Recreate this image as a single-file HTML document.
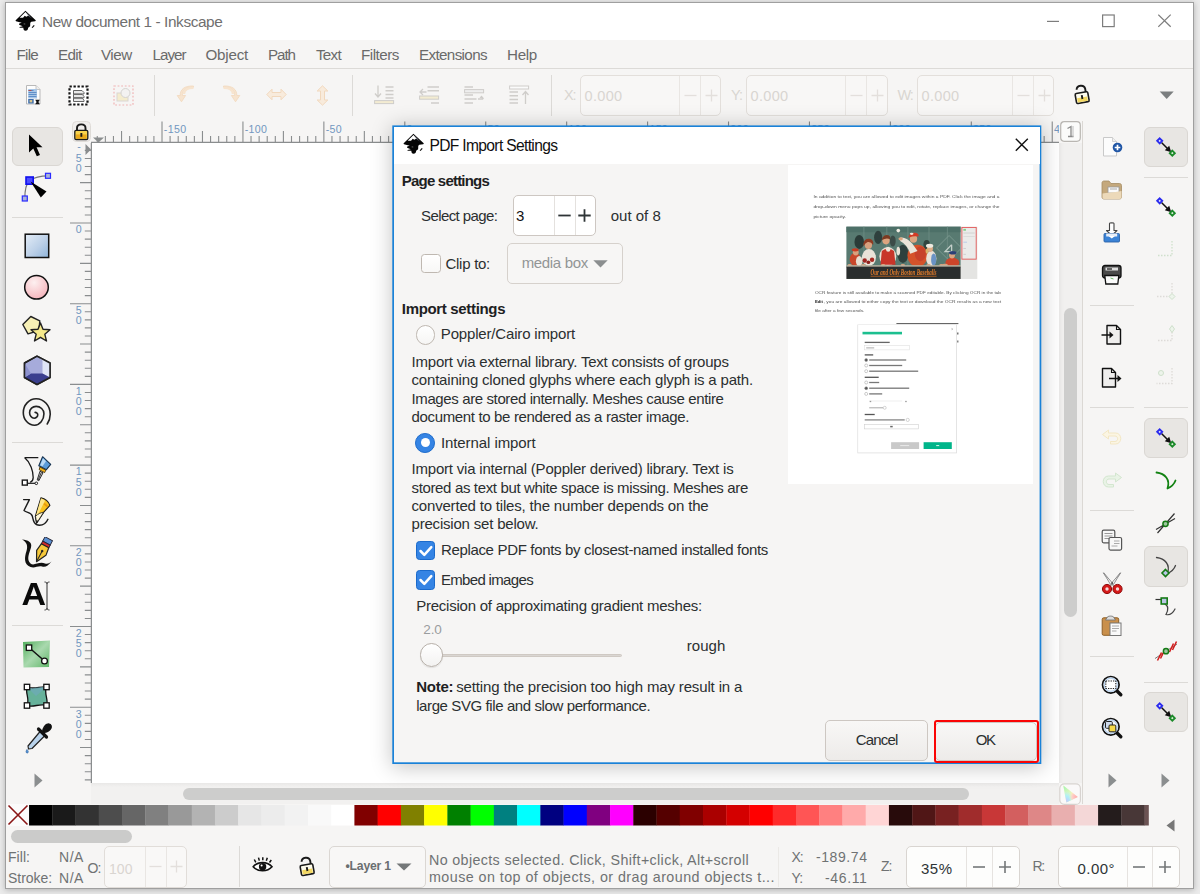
<!DOCTYPE html><html><head><meta charset="utf-8"><title>Inkscape</title><style>
*{box-sizing:border-box;margin:0;padding:0}
html,body{width:1200px;height:894px;overflow:hidden}
body{background:#ebebeb;font-family:"Liberation Sans",sans-serif;font-size:14px;color:#2e3436;position:relative}
.a{position:absolute}
.t{position:absolute;white-space:nowrap;line-height:1}
.hl{position:absolute;background:#dcdad7;height:1px}
.vl{position:absolute;background:#dcdad7;width:1px}
.spin{position:absolute;border:1px solid #ddd9d5;border-radius:5px;background:#faf9f8}
.spin2{position:absolute;border:1px solid #cdc7c2;border-radius:5px;background:#fff}
.btn{position:absolute;border:1px solid #cdc7c2;border-radius:5px;background:linear-gradient(#f8f7f6,#edebe9)}
.sel{position:absolute;background:#e8e6e3;border:1px solid #dad7d3;border-radius:6px}
</style></head><body>
<div class="a" style="left:5.0px;top:2.0px;width:1189.0px;height:887.0px;background:#f6f5f4;border:1px solid #9f9f9f;box-shadow:0 1px 6px rgba(0,0,0,.25)"></div>
<div class="a" style="left:6.0px;top:3.0px;width:1187.0px;height:37.0px;background:#fff"></div>
<svg class="a" style="left:15.0px;top:10.0px;" width="23" height="23" viewBox="0 0 23 23"><g transform="translate(-3,-4) scale(0.03356)"><path d="M400 138 L706 424 Q718 446 690 452 L575 470 L545 500 L540 600 L482 648 Q478 738 402 738 Q338 735 338 650 L222 650 L228 628 L320 600 L212 560 L215 522 L290 500 L120 458 Q96 446 110 428 Z" fill="#050505"/><path d="M400 178 L540 312 L480 288 L425 322 L380 292 L330 352 L228 352 Z" fill="#fff"/><path d="M418 196 L610 378 L520 330 L478 288 Z" fill="#5a5f6e" opacity=".75"/><path d="M585 640 L648 566 L676 590 L612 656 Z" fill="#111"/><path d="M345 520 Q380 500 405 535 Q380 560 345 545z" fill="#777" opacity=".7"/></g></svg>
<div class="t" style="left:42.0px;top:13.96px;font-size:15.4px;color:#6f6f6f;letter-spacing:-0.415px;">New document 1 - Inkscape</div>
<svg class="a" style="left:1046.0px;top:13.0px;" width="16" height="16" viewBox="0 0 16 16"><path d="M1 8.400h12" stroke="#7d7d7d" stroke-width="1.200"/></svg>
<svg class="a" style="left:1102.0px;top:14.0px;" width="14" height="14" viewBox="0 0 14 14"><rect x=".6" y="1" width="11.600" height="11.600" fill="none" stroke="#7d7d7d" stroke-width="1.200"/></svg>
<svg class="a" style="left:1158.0px;top:14.0px;" width="14" height="14" viewBox="0 0 14 14"><path d="M.3 .6l12.400 12.200M12.700 .6l-12.400 12.200" stroke="#7d7d7d" stroke-width="1.200"/></svg>
<div class="t" style="left:16.5px;top:47.13px;font-size:15.2px;color:#6a6a6a;letter-spacing:-0.747px;">File</div>
<div class="t" style="left:58.0px;top:47.13px;font-size:15.2px;color:#6a6a6a;letter-spacing:-0.623px;">Edit</div>
<div class="t" style="left:101.0px;top:47.13px;font-size:15.2px;color:#6a6a6a;letter-spacing:-0.491px;">View</div>
<div class="t" style="left:152.5px;top:47.13px;font-size:15.2px;color:#6a6a6a;letter-spacing:-1.004px;">Layer</div>
<div class="t" style="left:205.5px;top:47.13px;font-size:15.2px;color:#6a6a6a;letter-spacing:-0.238px;">Object</div>
<div class="t" style="left:268.0px;top:47.13px;font-size:15.2px;color:#6a6a6a;letter-spacing:-1.067px;">Path</div>
<div class="t" style="left:316.0px;top:47.13px;font-size:15.2px;color:#6a6a6a;letter-spacing:-0.719px;">Text</div>
<div class="t" style="left:361.0px;top:47.13px;font-size:15.2px;color:#6a6a6a;letter-spacing:-0.482px;">Filters</div>
<div class="t" style="left:419.0px;top:47.13px;font-size:15.2px;color:#6a6a6a;letter-spacing:-0.635px;">Extensions</div>
<div class="t" style="left:507.0px;top:47.13px;font-size:15.2px;color:#6a6a6a;letter-spacing:-0.314px;">Help</div>
<div class="hl" style="left:6px;top:68px;width:1187px"></div>
<div class="a" style="left:91.0px;top:143.0px;width:968.0px;height:640.0px;background:#fff"></div>
<svg class="a" style="left:25.0px;top:85.0px;" width="17" height="21" viewBox="0 0 17 21"><path d="M1.5 .5h9.500l4 4v14.500h-13.500z" fill="#fdfdfd" stroke="#b9b9b9" stroke-width="1"/><path d="M11 .5v4h4" fill="#eee" stroke="#b9b9b9" stroke-width=".8"/><rect x="3.2" y="4" width="8.800" height="9.500" fill="#a9c6e6"/><path d="M3.500 5.500h5M3.500 7.500h8M3.500 9.500h8M3.500 11.500h8" stroke="#5f8fc9" stroke-width="1"/><path d="M3.500 5.500h3" stroke="#b05050" stroke-width="1"/><rect x="3.200" y="14" width="5.500" height="4.500" fill="#3f6fae"/><rect x="4.600" y="15" width="2.600" height="2.400" fill="#d8c48a"/><path d="M10.200 14.700h4.600l-1.400 2.200 1.400 2.300h-4.600l1.400-2.300z" fill="#111"/></svg>
<svg class="a" style="left:68.0px;top:85.0px;" width="21" height="21" viewBox="0 0 21 21"><rect x="1.500" y="1.500" width="18" height="18" fill="#fff" stroke="#111" stroke-width="2.200" stroke-dasharray="2.300 1.700"/><path d="M5.500 5.500h8.500l2 2v1.500h-10.500z M5.500 9.300h8.500l2 2v1.500h-10.500z M5.500 13.100h8.500l2 2v1.400h-10.500z" fill="#e9e9e9" stroke="#555" stroke-width=".9"/></svg>
<svg class="a" style="left:113.0px;top:85.0px;" width="21" height="21" viewBox="0 0 21 21"><rect x="1" y="1" width="19" height="19" fill="none" stroke="#f0b4b4" stroke-width="1.200" stroke-dasharray="1.800 1.800"/><rect x="4" y="8" width="11" height="8" fill="#f4eccd" stroke="#d9d6d2" stroke-width="1"/><circle cx="12.500" cy="8" r="4.500" fill="#f3f2f1" stroke="#d5d3d0" stroke-width="1"/></svg>
<div class="vl" style="left:154px;top:75px;height:41px"></div>
<svg class="a" style="left:176.0px;top:85.0px;" width="19" height="19" viewBox="0 0 19 19"><path d="M17.500 2.200C9.500 1.800 6.200 5.500 6.300 10.500H9.600L5.500 16.800L1.200 10.500H4.200C4 4.500 8.500 .6 17.500 1z" fill="#f7e4cf" stroke="#f1d8bd" stroke-width=".8" stroke-linejoin="round"/><path d="M17.500 2.900C12 2.800 8.200 5 8 9" fill="none" stroke="#f7e4cf" stroke-width="2.400"/></svg>
<svg class="a" style="left:222.0px;top:85.0px;" width="19" height="19" viewBox="0 0 19 19"><g transform="translate(19,0) scale(-1,1)"><path d="M17.500 2.200C9.500 1.800 6.200 5.500 6.300 10.500H9.600L5.500 16.800L1.200 10.500H4.200C4 4.500 8.500 .6 17.500 1z" fill="#f7e4cf" stroke="#f1d8bd" stroke-width=".8" stroke-linejoin="round"/><path d="M17.500 2.900C12 2.800 8.200 5 8 9" fill="none" stroke="#f7e4cf" stroke-width="2.400"/></g></svg>
<svg class="a" style="left:266.0px;top:88.0px;" width="21" height="13" viewBox="0 0 21 13"><path d="M.8 6.500L6 1.200V4.500H15V1.200L20.200 6.500L15 11.800V8.500H6V11.800z" fill="#f8ebdc" stroke="#f1d8bd" stroke-width="1" stroke-linejoin="round"/></svg>
<svg class="a" style="left:316.0px;top:85.0px;" width="13" height="21" viewBox="0 0 13 21"><path d="M6.500 .8L11.800 6H8.500V15H11.800L6.500 20.200L1.200 15H4.500V6H1.200z" fill="#f8ebdc" stroke="#f1d8bd" stroke-width="1" stroke-linejoin="round"/></svg>
<div class="vl" style="left:352px;top:75px;height:41px"></div>
<svg class="a" style="left:374.0px;top:85.0px;" width="21" height="20" viewBox="0 0 21 20"><path d="M4 .5V11M1 8.500l3 3.500 3-3.500" fill="none" stroke="#cfcdca" stroke-width="1.300"/><path d="M11.500 2h8M11.500 5.700h8M11.500 9.400h8M11.500 13h8" stroke="#cfcdca" stroke-width="1.500"/><rect x=".6" y="15.600" width="19" height="3" fill="#f3ecd2" stroke="#cfcdca" stroke-width="1"/></svg>
<svg class="a" style="left:419.0px;top:85.0px;" width="21" height="20" viewBox="0 0 21 20"><path d="M1 7h6.500M4 4l-3 3 3 3" fill="none" stroke="#cfcdca" stroke-width="1.300"/><path d="M8.500 2h11.500M8.500 5.700h11.500M12 18h8" stroke="#cfcdca" stroke-width="1.500"/><rect x=".6" y="11" width="19" height="3.200" fill="#f3ecd2" stroke="#cfcdca" stroke-width="1"/></svg>
<svg class="a" style="left:464.0px;top:85.0px;" width="21" height="20" viewBox="0 0 21 20"><path d="M.5 2h8.500M.5 10h8.500M.5 14h12M.5 18h8.500" stroke="#cfcdca" stroke-width="1.500"/><rect x=".6" y="4.600" width="19" height="3.200" fill="#eeeeee" stroke="#cfcdca" stroke-width="1"/><path d="M14 14h5M17 11.500l2.500 2.500" fill="none" stroke="#cfcdca" stroke-width="1.300"/><path d="M15.500 13l2-2.500 2 2.500z" fill="#cfcdca"/></svg>
<svg class="a" style="left:509.0px;top:85.0px;" width="21" height="20" viewBox="0 0 21 20"><rect x=".6" y="1" width="19" height="3" fill="#fbfbfb" stroke="#cfcdca" stroke-width="1"/><path d="M.5 7h8.500M.5 10.700h8.500M.5 14.400h8.500M.5 18h8.500" stroke="#cfcdca" stroke-width="1.500"/><path d="M16.500 19V7M13.500 10l3-3.500 3 3.500" fill="none" stroke="#cfcdca" stroke-width="1.300"/></svg>
<div class="vl" style="left:551px;top:75px;height:41px"></div>
<div class="t" style="left:564.0px;top:87.73px;font-size:14.5px;color:#d9d5d1;letter-spacing:-1.100px;">X:</div>
<div class="spin" style="left:580px;top:75px;width:141px;height:41px;background:#f8f7f6;border-color:#e3dfdb"></div>
<div class="vl" style="left:679px;top:76px;height:39px;background:#e9e6e3"></div>
<div class="vl" style="left:700px;top:76px;height:39px;background:#e9e6e3"></div>
<div class="t" style="left:584.5px;top:88.73px;font-size:14.5px;color:#d9d5d1;letter-spacing:0.345px;">0.000</div>
<svg class="a" style="left:683.5px;top:89.0px;" width="13" height="13" viewBox="0 0 13 13"><path d="M.5 6.500h12" stroke="#e3dfdc" stroke-width="1.300"/></svg>
<svg class="a" style="left:704.5px;top:89.0px;" width="13" height="13" viewBox="0 0 13 13"><path d="M.5 6.500h12M6.500 .5v12" stroke="#e3dfdc" stroke-width="1.300"/></svg>
<div class="t" style="left:731.0px;top:87.73px;font-size:14.5px;color:#d9d5d1;letter-spacing:-0.949px;">Y:</div>
<div class="spin" style="left:746px;top:75px;width:142px;height:41px;background:#f8f7f6;border-color:#e3dfdb"></div>
<div class="vl" style="left:845px;top:76px;height:39px;background:#e9e6e3"></div>
<div class="vl" style="left:866px;top:76px;height:39px;background:#e9e6e3"></div>
<div class="t" style="left:750.5px;top:88.73px;font-size:14.5px;color:#d9d5d1;letter-spacing:0.345px;">0.000</div>
<svg class="a" style="left:849.5px;top:89.0px;" width="13" height="13" viewBox="0 0 13 13"><path d="M.5 6.500h12" stroke="#e3dfdc" stroke-width="1.300"/></svg>
<svg class="a" style="left:871.0px;top:89.0px;" width="13" height="13" viewBox="0 0 13 13"><path d="M.5 6.500h12M6.500 .5v12" stroke="#e3dfdc" stroke-width="1.300"/></svg>
<div class="t" style="left:897.5px;top:87.73px;font-size:14.5px;color:#d9d5d1;letter-spacing:-1.227px;">W:</div>
<div class="spin" style="left:917px;top:75px;width:137px;height:41px;background:#f8f7f6;border-color:#e3dfdb"></div>
<div class="vl" style="left:1012px;top:76px;height:39px;background:#e9e6e3"></div>
<div class="vl" style="left:1033px;top:76px;height:39px;background:#e9e6e3"></div>
<div class="t" style="left:921.5px;top:88.73px;font-size:14.5px;color:#d9d5d1;letter-spacing:0.345px;">0.000</div>
<svg class="a" style="left:1016.5px;top:89.0px;" width="13" height="13" viewBox="0 0 13 13"><path d="M.5 6.500h12" stroke="#e3dfdc" stroke-width="1.300"/></svg>
<svg class="a" style="left:1037.5px;top:89.0px;" width="13" height="13" viewBox="0 0 13 13"><path d="M.5 6.500h12M6.500 .5v12" stroke="#e3dfdc" stroke-width="1.300"/></svg>
<svg class="a" style="left:1072.0px;top:82.3px;" width="20" height="23" viewBox="0 0 20 23"><g transform="rotate(-10 10 13)"><path d="M14.200 11V7.200C13.800 2.600 6.500 2.400 5.600 6.800" fill="none" stroke="#1a1a1a" stroke-width="1.900"/><rect x="3.300" y="10.600" width="12.800" height="10" rx="1.300" fill="#fdfbec" stroke="#1a1a1a" stroke-width="1.600"/><rect x="4.600" y="15.400" width="10.200" height="4.300" fill="#f3d862"/><rect x="8.800" y="13" width="1.900" height="4" fill="#1a1a1a"/></g></svg>
<svg class="a" style="left:1159.0px;top:91.0px;" width="16" height="9" viewBox="0 0 16 9"><path d="M.7 .5h14l-7 7.600z" fill="#7b7e7f"/></svg>
<svg class="a" style="left:91.0px;top:121.0px;" width="968" height="22" viewBox="0 0 968 22"><path d="M6.27 15V21.500 M14.36 15V21.500 M22.45 15V21.500 M30.55 10V21.500 M38.64 15V21.500 M46.73 15V21.500 M54.82 15V21.500 M62.92 15V21.500 M71.01 0.5V21.500 M79.10 15V21.500 M87.20 15V21.500 M95.29 15V21.500 M103.38 15V21.500 M111.47 10V21.500 M119.57 15V21.500 M127.66 15V21.500 M135.75 15V21.500 M143.85 15V21.500 M151.94 0.5V21.500 M160.03 15V21.500 M168.13 15V21.500 M176.22 15V21.500 M184.31 15V21.500 M192.40 10V21.500 M200.50 15V21.500 M208.59 15V21.500 M216.68 15V21.500 M224.78 15V21.500 M232.87 0.5V21.500 M240.96 15V21.500 M249.06 15V21.500 M257.15 15V21.500 M265.24 15V21.500 M273.34 10V21.500 M281.43 15V21.500 M289.52 15V21.500 M297.61 15V21.500 M305.71 15V21.500 M313.80 0.5V21.500 M321.89 15V21.500 M329.99 15V21.500 M338.08 15V21.500 M346.17 15V21.500 M354.26 10V21.500 M362.36 15V21.500 M370.45 15V21.500 M378.54 15V21.500 M386.64 15V21.500 M394.73 0.5V21.500 M402.82 15V21.500 M410.92 15V21.500 M419.01 15V21.500 M427.10 15V21.500 M435.20 10V21.500 M443.29 15V21.500 M451.38 15V21.500 M459.47 15V21.500 M467.57 15V21.500 M475.66 0.5V21.500 M483.75 15V21.500 M491.85 15V21.500 M499.94 15V21.500 M508.03 15V21.500 M516.12 10V21.500 M524.22 15V21.500 M532.31 15V21.500 M540.40 15V21.500 M548.50 15V21.500 M556.59 0.5V21.500 M564.68 15V21.500 M572.78 15V21.500 M580.87 15V21.500 M588.96 15V21.500 M597.06 10V21.500 M605.15 15V21.500 M613.24 15V21.500 M621.33 15V21.500 M629.43 15V21.500 M637.52 0.5V21.500 M645.61 15V21.500 M653.71 15V21.500 M661.80 15V21.500 M669.89 15V21.500 M677.99 10V21.500 M686.08 15V21.500 M694.17 15V21.500 M702.26 15V21.500 M710.36 15V21.500 M718.45 0.5V21.500 M726.54 15V21.500 M734.64 15V21.500 M742.73 15V21.500 M750.82 15V21.500 M758.92 10V21.500 M767.01 15V21.500 M775.10 15V21.500 M783.19 15V21.500 M791.29 15V21.500 M799.38 0.5V21.500 M807.47 15V21.500 M815.57 15V21.500 M823.66 15V21.500 M831.75 15V21.500 M839.85 10V21.500 M847.94 15V21.500 M856.03 15V21.500 M864.12 15V21.500 M872.22 15V21.500 M880.31 0.5V21.500 M888.40 15V21.500 M896.50 15V21.500 M904.59 15V21.500 M912.68 15V21.500 M920.78 10V21.500 M928.87 15V21.500 M936.96 15V21.500 M945.05 15V21.500 M953.15 15V21.500 M961.24 0.5V21.500" stroke="#8a8d8e" stroke-width="1.100" fill="none"/><path d="M0 21.500H968" stroke="#8a8d8e" stroke-width="1.300"/></svg>
<div class="a" style="left:91px;top:118px;width:968px;height:25px;overflow:hidden">
<div class="t" style="left:72.8px;top:5.83px;font-size:10.6px;color:#7297c0;letter-spacing:.35px;">-150</div>
<div class="t" style="left:153.7px;top:5.83px;font-size:10.6px;color:#7297c0;letter-spacing:.35px;">-100</div>
<div class="t" style="left:234.7px;top:5.83px;font-size:10.6px;color:#7297c0;letter-spacing:.35px;">-50</div>
<div class="t" style="left:315.6px;top:5.83px;font-size:10.6px;color:#7297c0;letter-spacing:.35px;">0</div>
<div class="t" style="left:396.5px;top:5.83px;font-size:10.6px;color:#7297c0;letter-spacing:.35px;">50</div>
<div class="t" style="left:477.5px;top:5.83px;font-size:10.6px;color:#7297c0;letter-spacing:.35px;">100</div>
<div class="t" style="left:558.4px;top:5.83px;font-size:10.6px;color:#7297c0;letter-spacing:.35px;">150</div>
<div class="t" style="left:639.3px;top:5.83px;font-size:10.6px;color:#7297c0;letter-spacing:.35px;">200</div>
<div class="t" style="left:720.2px;top:5.83px;font-size:10.6px;color:#7297c0;letter-spacing:.35px;">250</div>
<div class="t" style="left:801.2px;top:5.83px;font-size:10.6px;color:#7297c0;letter-spacing:.35px;">300</div>
<div class="t" style="left:882.1px;top:5.83px;font-size:10.6px;color:#7297c0;letter-spacing:.35px;">350</div>
<div class="t" style="left:963.0px;top:5.83px;font-size:10.6px;color:#7297c0;letter-spacing:.35px;">400</div>
</div>
<svg class="a" style="left:69.5px;top:143.0px;" width="22" height="640" viewBox="0 0 22 640"><path d="M14.8 7.37H21.500 M14.8 15.44H21.500 M14.8 23.51H21.500 M14.8 31.58H21.500 M10 39.65H21.500 M14.8 47.72H21.500 M14.8 55.79H21.500 M14.8 63.86H21.500 M14.8 71.93H21.500 M0 80.00H21.500 M14.8 88.07H21.500 M14.8 96.14H21.500 M14.8 104.21H21.500 M14.8 112.28H21.500 M10 120.35H21.500 M14.8 128.42H21.500 M14.8 136.49H21.500 M14.8 144.56H21.500 M14.8 152.63H21.500 M0 160.70H21.500 M14.8 168.77H21.500 M14.8 176.84H21.500 M14.8 184.91H21.500 M14.8 192.98H21.500 M10 201.05H21.500 M14.8 209.12H21.500 M14.8 217.19H21.500 M14.8 225.26H21.500 M14.8 233.33H21.500 M0 241.40H21.500 M14.8 249.47H21.500 M14.8 257.54H21.500 M14.8 265.61H21.500 M14.8 273.68H21.500 M10 281.75H21.500 M14.8 289.82H21.500 M14.8 297.89H21.500 M14.8 305.96H21.500 M14.8 314.03H21.500 M0 322.10H21.500 M14.8 330.17H21.500 M14.8 338.24H21.500 M14.8 346.31H21.500 M14.8 354.38H21.500 M10 362.45H21.500 M14.8 370.52H21.500 M14.8 378.59H21.500 M14.8 386.66H21.500 M14.8 394.73H21.500 M0 402.80H21.500 M14.8 410.87H21.500 M14.8 418.94H21.500 M14.8 427.01H21.500 M14.8 435.08H21.500 M10 443.15H21.500 M14.8 451.22H21.500 M14.8 459.29H21.500 M14.8 467.36H21.500 M14.8 475.43H21.500 M0 483.50H21.500 M14.8 491.57H21.500 M14.8 499.64H21.500 M14.8 507.71H21.500 M14.8 515.78H21.500 M10 523.85H21.500 M14.8 531.92H21.500 M14.8 539.99H21.500 M14.8 548.06H21.500 M14.8 556.13H21.500 M0 564.20H21.500 M14.8 572.27H21.500 M14.8 580.34H21.500 M14.8 588.41H21.500 M14.8 596.48H21.500 M10 604.55H21.500 M14.8 612.62H21.500 M14.8 620.69H21.500 M14.8 628.76H21.500 M14.8 636.83H21.500" stroke="#8a8d8e" stroke-width="1.100" fill="none"/><path d="M21.400 0V640" stroke="#8a8d8e" stroke-width="1.300"/></svg>
<div class="t" style="left:77.2px;top:141.13px;font-size:10.6px;color:#7297c0;">-</div>
<div class="t" style="left:75.7px;top:152.78px;font-size:10.6px;color:#7297c0;">5</div>
<div class="t" style="left:75.7px;top:162.93px;font-size:10.6px;color:#7297c0;">0</div>
<div class="t" style="left:75.7px;top:224.33px;font-size:10.6px;color:#7297c0;">0</div>
<div class="t" style="left:75.7px;top:305.03px;font-size:10.6px;color:#7297c0;">5</div>
<div class="t" style="left:75.7px;top:315.18px;font-size:10.6px;color:#7297c0;">0</div>
<div class="t" style="left:75.7px;top:385.73px;font-size:10.6px;color:#7297c0;">1</div>
<div class="t" style="left:75.7px;top:395.88px;font-size:10.6px;color:#7297c0;">0</div>
<div class="t" style="left:75.7px;top:406.03px;font-size:10.6px;color:#7297c0;">0</div>
<div class="t" style="left:75.7px;top:466.43px;font-size:10.6px;color:#7297c0;">1</div>
<div class="t" style="left:75.7px;top:476.58px;font-size:10.6px;color:#7297c0;">5</div>
<div class="t" style="left:75.7px;top:486.73px;font-size:10.6px;color:#7297c0;">0</div>
<div class="t" style="left:75.7px;top:547.13px;font-size:10.6px;color:#7297c0;">2</div>
<div class="t" style="left:75.7px;top:557.28px;font-size:10.6px;color:#7297c0;">0</div>
<div class="t" style="left:75.7px;top:567.43px;font-size:10.6px;color:#7297c0;">0</div>
<div class="t" style="left:75.7px;top:627.83px;font-size:10.6px;color:#7297c0;">2</div>
<div class="t" style="left:75.7px;top:637.98px;font-size:10.6px;color:#7297c0;">5</div>
<div class="t" style="left:75.7px;top:648.13px;font-size:10.6px;color:#7297c0;">0</div>
<div class="t" style="left:75.7px;top:708.53px;font-size:10.6px;color:#7297c0;">3</div>
<div class="t" style="left:75.7px;top:718.68px;font-size:10.6px;color:#7297c0;">0</div>
<div class="t" style="left:75.7px;top:728.83px;font-size:10.6px;color:#7297c0;">0</div>
<svg class="a" style="left:92.0px;top:137.0px;" width="14" height="6" viewBox="0 0 14 6"><path d="M1 .5h11l-5.500 5z" fill="#8a8d8e"/></svg>
<svg class="a" style="left:85.0px;top:143.0px;" width="7" height="14" viewBox="0 0 7 14"><path d="M.5 1v11l5.500-5.500z" fill="#8a8d8e"/></svg>
<svg class="a" style="left:72.0px;top:121.0px;" width="19" height="21" viewBox="0 0 19 21"><rect x=".5" y=".5" width="18" height="20" rx="4" fill="#f0eeec" stroke="#dedbd7"/><path d="M5 9.500V7C5 2.200 13.500 2.200 13.500 7V9.500" fill="none" stroke="#1a1a1a" stroke-width="1.900"/><rect x="2.800" y="9.300" width="13" height="9.200" rx="1.300" fill="#f7d34f" stroke="#1a1a1a" stroke-width="1.300"/><rect x="4" y="13.400" width="10.600" height="4.200" fill="#e9a91b"/><rect x="8.400" y="12" width="1.900" height="3.800" fill="#1a1a1a"/></svg>
<div class="a" style="left:91.0px;top:783.0px;width:968.0px;height:21.0px;background:linear-gradient(#e9e8e7,#f2f1f0 4px,#f2f1f0)"></div>
<div class="a" style="left:183.0px;top:787.5px;width:786.0px;height:12.5px;background:#cdcdcc;border-radius:6.500px"></div>
<div class="a" style="left:1059.0px;top:143.0px;width:23.0px;height:640.0px;background:linear-gradient(90deg,#e9e8e7,#f1f0ef 4px,#f1f0ef)"></div>
<div class="a" style="left:1064.2px;top:307.5px;width:12.5px;height:309.0px;background:#cdcdcc;border-radius:6.500px"></div>
<div class="vl" style="left:1082px;top:121px;height:683px;background:#dbd8d4"></div>
<svg class="a" style="left:1060.0px;top:121.0px;" width="21" height="21" viewBox="0 0 21 21"><rect x=".7" y=".7" width="19.600" height="19.600" rx="3.500" fill="#fbfbfa" stroke="#b9b6b2" stroke-width="1.200"/><path d="M7.500 7.500l3.500-2v10M8 15.500h5.500" fill="none" stroke="#8b8b8b" stroke-width="1.300"/><path d="M13 5v11" stroke="#bdbdbd" stroke-width="1"/></svg>
<svg class="a" style="left:1059.0px;top:782.5px;" width="23" height="23" viewBox="0 0 23 23"><defs><clipPath id="tri"><path d="M4.300 2.400L18.800 13.900L7.400 19.600z"/></clipPath><radialGradient id="gA" cx="5" cy="4" r="11" gradientUnits="userSpaceOnUse"><stop offset="0" stop-color="#a9f5b4"/><stop offset="1" stop-color="#a9f5b4" stop-opacity="0"/></radialGradient><radialGradient id="gB" cx="7" cy="18" r="10" gradientUnits="userSpaceOnUse"><stop offset="0" stop-color="#c3c9fa"/><stop offset=".5" stop-color="#aef0f8"/><stop offset="1" stop-color="#aef0f8" stop-opacity="0"/></radialGradient><radialGradient id="gC" cx="18" cy="14" r="8" gradientUnits="userSpaceOnUse"><stop offset="0" stop-color="#ffaab0"/><stop offset=".6" stop-color="#ffd0c8"/><stop offset="1" stop-color="#fff6a8" stop-opacity="0"/></radialGradient></defs><rect x=".8" y=".8" width="20.600" height="20.600" rx="4.500" fill="#faf9f9" stroke="#d7d3d0" stroke-width="1.200"/><g clip-path="url(#tri)"><rect width="23" height="23" fill="#f7f7c0"/><rect width="23" height="23" fill="url(#gA)"/><rect width="23" height="23" fill="url(#gB)"/><rect width="23" height="23" fill="url(#gC)"/></g></svg>
<svg class="a" style="left:7.0px;top:804.0px;" width="22" height="22" viewBox="0 0 22 22"><rect x="0" y="0" width="22" height="22" fill="#fbfbfb"/><path d="M1.500 1.500l19 19M20.500 1.500l-19 19" stroke="#8a1515" stroke-width="1.600"/></svg>
<svg class="a" style="left:29.0px;top:804.5px;" width="1120" height="21" viewBox="0 0 1120 21"><rect x="0.05" y="0" width="23.54" height="20.500" fill="#000000"/><rect x="23.29" y="0" width="23.54" height="20.500" fill="#1a1a1a"/><rect x="46.53" y="0" width="23.54" height="20.500" fill="#333333"/><rect x="69.77" y="0" width="23.54" height="20.500" fill="#4d4d4d"/><rect x="93.01" y="0" width="23.54" height="20.500" fill="#666666"/><rect x="116.25" y="0" width="23.54" height="20.500" fill="#808080"/><rect x="139.49" y="0" width="23.54" height="20.500" fill="#999999"/><rect x="162.73" y="0" width="23.54" height="20.500" fill="#b3b3b3"/><rect x="185.97" y="0" width="23.54" height="20.500" fill="#cccccc"/><rect x="209.21" y="0" width="23.54" height="20.500" fill="#e6e6e6"/><rect x="232.45" y="0" width="23.54" height="20.500" fill="#ececec"/><rect x="255.69" y="0" width="23.54" height="20.500" fill="#f2f2f2"/><rect x="278.93" y="0" width="23.54" height="20.500" fill="#f9f9f9"/><rect x="302.17" y="0" width="23.54" height="20.500" fill="#ffffff"/><rect x="325.41" y="0" width="23.54" height="20.500" fill="#800000"/><rect x="348.65" y="0" width="23.54" height="20.500" fill="#ff0000"/><rect x="371.89" y="0" width="23.54" height="20.500" fill="#808000"/><rect x="395.13" y="0" width="23.54" height="20.500" fill="#ffff00"/><rect x="418.37" y="0" width="23.54" height="20.500" fill="#008000"/><rect x="441.61" y="0" width="23.54" height="20.500" fill="#00ff00"/><rect x="464.85" y="0" width="23.54" height="20.500" fill="#008080"/><rect x="488.09" y="0" width="23.54" height="20.500" fill="#00ffff"/><rect x="511.33" y="0" width="23.54" height="20.500" fill="#000080"/><rect x="534.57" y="0" width="23.54" height="20.500" fill="#0000ff"/><rect x="557.81" y="0" width="23.54" height="20.500" fill="#800080"/><rect x="581.05" y="0" width="23.54" height="20.500" fill="#ff00ff"/><rect x="604.29" y="0" width="23.54" height="20.500" fill="#2b0000"/><rect x="627.53" y="0" width="23.54" height="20.500" fill="#550000"/><rect x="650.77" y="0" width="23.54" height="20.500" fill="#800000"/><rect x="674.01" y="0" width="23.54" height="20.500" fill="#aa0000"/><rect x="697.25" y="0" width="23.54" height="20.500" fill="#d40000"/><rect x="720.49" y="0" width="23.54" height="20.500" fill="#ff0000"/><rect x="743.73" y="0" width="23.54" height="20.500" fill="#ff2a2a"/><rect x="766.97" y="0" width="23.54" height="20.500" fill="#ff5555"/><rect x="790.21" y="0" width="23.54" height="20.500" fill="#ff8080"/><rect x="813.45" y="0" width="23.54" height="20.500" fill="#ffaaaa"/><rect x="836.69" y="0" width="23.54" height="20.500" fill="#ffd5d5"/><rect x="859.93" y="0" width="23.54" height="20.500" fill="#280b0b"/><rect x="883.17" y="0" width="23.54" height="20.500" fill="#501616"/><rect x="906.41" y="0" width="23.54" height="20.500" fill="#782121"/><rect x="929.65" y="0" width="23.54" height="20.500" fill="#a02c2c"/><rect x="952.89" y="0" width="23.54" height="20.500" fill="#c83737"/><rect x="976.13" y="0" width="23.54" height="20.500" fill="#d35f5f"/><rect x="999.37" y="0" width="23.54" height="20.500" fill="#de8787"/><rect x="1022.61" y="0" width="23.54" height="20.500" fill="#e9afaf"/><rect x="1045.85" y="0" width="23.54" height="20.500" fill="#f4d7d7"/><rect x="1069.09" y="0" width="23.54" height="20.500" fill="#241c1c"/><rect x="1092.33" y="0" width="23.54" height="20.500" fill="#483737"/><rect x="1115.57" y="0" width="4.23" height="20.500" fill="#6c5353"/></svg>
<svg class="a" style="left:1166.0px;top:819.0px;" width="9" height="13" viewBox="0 0 9 13"><path d="M8.500 .5v12l-8-6z" fill="#777"/></svg>
<div class="a" style="left:11.0px;top:830.0px;width:121.0px;height:12.5px;background:#cbcbca;border-radius:6.500px"></div>
<div class="t" style="left:8.0px;top:849.65px;font-size:14px;color:#6f7273;letter-spacing:0.046px;">Fill:</div>
<div class="t" style="left:59.0px;top:849.65px;font-size:14px;color:#6f7273;letter-spacing:0.553px;">N/A</div>
<div class="t" style="left:8.0px;top:871.15px;font-size:14px;color:#6f7273;letter-spacing:-0.051px;">Stroke:</div>
<div class="t" style="left:59.0px;top:871.15px;font-size:14px;color:#6f7273;letter-spacing:0.553px;">N/A</div>
<div class="t" style="left:87.5px;top:860.65px;font-size:14px;color:#6f7273;letter-spacing:-0.891px;">O:</div>
<div class="spin" style="left:104px;top:846px;width:83px;height:41.500px;background:#f9f8f7;border-color:#e1ddd9"></div>
<div class="vl" style="left:145px;top:847px;height:40px;background:#e9e6e3"></div><div class="vl" style="left:166px;top:847px;height:40px;background:#e9e6e3"></div>
<div class="t" style="left:109.0px;top:861.65px;font-size:14px;color:#d9d5d1;letter-spacing:0.048px;">100</div>
<svg class="a" style="left:149.0px;top:860.0px;" width="13" height="13" viewBox="0 0 13 13"><path d="M.5 6.500h12" stroke="#e3dfdc" stroke-width="1.300"/></svg>
<svg class="a" style="left:170.0px;top:860.0px;" width="13" height="13" viewBox="0 0 13 13"><path d="M.5 6.500h12M6.500 .5v12" stroke="#e3dfdc" stroke-width="1.300"/></svg>
<div class="vl" style="left:238.500px;top:846px;height:41px"></div>
<svg class="a" style="left:252.0px;top:856.0px;" width="22" height="18" viewBox="0 0 22 18"><path d="M1.200 10.800C5.500 5.200 15.500 5.200 20 10.800C15.500 16 5.500 16 1.200 10.800z" fill="#fff" stroke="#111" stroke-width="1.600"/><circle cx="10.600" cy="10.800" r="3.700" fill="#111"/><circle cx="9.600" cy="9.600" r="1" fill="#fff"/><path d="M3.800 6.300L2.300 3.500M7.300 4.600L6.500 1.600M10.800 4.200V1.200M14.300 4.700L15.300 1.800M17.500 6.500L19.300 4" stroke="#111" stroke-width="1.500"/></svg>
<svg class="a" style="left:297.0px;top:853.8px;" width="20" height="23" viewBox="0 0 20 23"><g transform="rotate(-10 10 13)"><path d="M14.200 11V7.200C13.800 2.600 6.500 2.400 5.600 6.800" fill="none" stroke="#1a1a1a" stroke-width="1.900"/><rect x="3.300" y="10.600" width="12.800" height="10" rx="1.300" fill="#fdfbec" stroke="#1a1a1a" stroke-width="1.600"/><rect x="4.600" y="15.400" width="10.200" height="4.300" fill="#f3d862"/><rect x="8.800" y="13" width="1.900" height="4" fill="#1a1a1a"/></g></svg>
<div class="btn" style="left:329px;top:846px;width:96.500px;height:41.500px;background:#f8f7f6;border-color:#dbd7d3"></div>
<div class="t" style="left:345.5px;top:860.17px;font-size:12.2px;color:#6a6e70;font-weight:bold;letter-spacing:-0.187px;">•Layer 1</div>
<svg class="a" style="left:396.0px;top:863.0px;" width="16" height="8" viewBox="0 0 16 8"><path d="M.5 .5h15l-7.500 7z" fill="#757879"/></svg>
<div class="t" style="left:429.0px;top:852.90px;font-size:14.3px;color:#6f7273;letter-spacing:0.353px;">No objects selected. Click, Shift+click, Alt+scroll</div>
<div class="t" style="left:429.0px;top:870.40px;font-size:14.3px;color:#6f7273;letter-spacing:0.447px;">mouse on top of objects, or drag around objects t...</div>
<div class="vl" style="left:778px;top:847px;height:40px;background:#ebe9e6"></div>
<div class="t" style="left:791.5px;top:849.65px;font-size:14px;color:#6f7273;letter-spacing:-1.115px;">X:</div>
<div class="t" style="left:816.0px;top:849.65px;font-size:14px;color:#6f7273;letter-spacing:0.574px;">-189.74</div>
<div class="t" style="left:791.5px;top:871.15px;font-size:14px;color:#6f7273;letter-spacing:-0.729px;">Y:</div>
<div class="t" style="left:825.0px;top:871.15px;font-size:14px;color:#6f7273;letter-spacing:0.641px;">-46.11</div>
<div class="t" style="left:881.0px;top:859.15px;font-size:14px;color:#6f7273;letter-spacing:-0.971px;">Z:</div>
<div class="spin2" style="left:906px;top:846px;width:113.500px;height:41.500px;border-color:#d9d5d1;background:#fdfdfc"></div>
<div class="vl" style="left:966px;top:847px;height:40px;background:#e6e3e0"></div><div class="vl" style="left:992px;top:847px;height:40px;background:#e6e3e0"></div>
<div class="t" style="left:921.0px;top:860.80px;font-size:15px;color:#2e3436;letter-spacing:0.492px;">35%</div>
<svg class="a" style="left:972.0px;top:860.0px;" width="14" height="14" viewBox="0 0 14 14"><path d="M1 7h12" stroke="#747778" stroke-width="1.600"/></svg>
<svg class="a" style="left:997.5px;top:860.0px;" width="14" height="14" viewBox="0 0 14 14"><path d="M1 7h12M7 1v12" stroke="#747778" stroke-width="1.600"/></svg>
<div class="t" style="left:1032.5px;top:859.15px;font-size:14px;color:#6f7273;letter-spacing:-1.250px;">R:</div>
<div class="spin2" style="left:1057.500px;top:846px;width:122.200px;height:41.500px;border-color:#d9d5d1;background:#fdfdfc"></div>
<div class="vl" style="left:1127px;top:847px;height:40px;background:#e6e3e0"></div><div class="vl" style="left:1152px;top:847px;height:40px;background:#e6e3e0"></div>
<div class="t" style="left:1077.5px;top:860.80px;font-size:15px;color:#2e3436;letter-spacing:0.460px;">0.00°</div>
<svg class="a" style="left:1131.5px;top:860.0px;" width="14" height="14" viewBox="0 0 14 14"><path d="M1 7h12" stroke="#747778" stroke-width="1.600"/></svg>
<svg class="a" style="left:1157.5px;top:860.0px;" width="14" height="14" viewBox="0 0 14 14"><path d="M1 7h12M7 1v12" stroke="#747778" stroke-width="1.600"/></svg>
<div class="sel" style="left:11.500px;top:126.500px;width:51.500px;height:39.500px"></div>
<svg class="a" style="left:27.0px;top:133.0px;" width="18" height="26" viewBox="0 0 18 26"><path d="M2 1.500V19.500L6.300 15.500L9.800 23.300L13 21.900L9.600 14.300H15.500z" fill="#000"/></svg>
<svg class="a" style="left:21.0px;top:171.0px;" width="32" height="33" viewBox="0 0 32 33"><path d="M8.500 9.500C5 13 3.800 20 3.800 27.500" fill="none" stroke="#777" stroke-width="1.200"/><path d="M8.500 9.500C13 6.500 20 4.800 27 4.800" fill="none" stroke="#777" stroke-width="1.200"/><rect x="5" y="6" width="7.200" height="7.200" fill="#4d4dff" stroke="#1010ee" stroke-width="1.600"/><rect x="24.500" y="2.300" width="5" height="5" fill="#a9b3d9" stroke="#2a2aff" stroke-width="1.200"/><rect x="1.300" y="25" width="5" height="5" fill="#a9b3d9" stroke="#2a2aff" stroke-width="1.200"/><path d="M9.500 10.500L25.500 20.500L19.800 26.500z" fill="#000"/></svg>
<div class="hl" style="left:11.500px;top:217px;width:51.500px"></div>
<svg class="a" style="left:24.0px;top:233.0px;" width="26" height="26" viewBox="0 0 26 26"><defs><linearGradient id="rg" x1="0" y1="0" x2="1" y2="1"><stop offset="0" stop-color="#e4edf7"/><stop offset=".55" stop-color="#bcd0e8"/><stop offset="1" stop-color="#8fb4d9"/></linearGradient></defs><rect x="1.200" y="1.200" width="23.500" height="23.300" fill="url(#rg)" stroke="#111" stroke-width="1.500"/></svg>
<svg class="a" style="left:23.0px;top:274.0px;" width="27" height="27" viewBox="0 0 27 27"><defs><radialGradient id="cg2" cx=".4" cy=".3" r=".8"><stop offset="0" stop-color="#fdf0f0"/><stop offset="1" stop-color="#f5aeb6"/></radialGradient></defs><circle cx="13.500" cy="13.300" r="11.800" fill="url(#cg2)" stroke="#111" stroke-width="1.500"/></svg>
<svg class="a" style="left:21.0px;top:315.0px;" width="31" height="28" viewBox="0 0 31 28"><path d="M9.800 1.500L18.800 5.800L18 15.500L7 18.800L1.800 9.500z" fill="#f7f0b5" stroke="#222" stroke-width="1.400" stroke-linejoin="round"/><path d="M19.500 8L22 14.300L29 14.800L23.800 19.200L25.500 26L19.500 22.300L13.500 26L15.200 19.200L10 14.800L17 14.300z" fill="#f5e98a" stroke="#222" stroke-width="1.400" stroke-linejoin="round"/></svg>
<svg class="a" style="left:23.0px;top:355.0px;" width="29" height="31" viewBox="0 0 29 31"><path d="M14 1.200L27 8V22.500L14 29.500L1.500 22.500V8z" fill="#a6abdb" stroke="#222" stroke-width="1.500" stroke-linejoin="round"/><path d="M14 1.200L27 8V22.500L19.500 18.500V5.500z" fill="#dfe5f7"/><path d="M1.500 22.500L14 29.500L27 22.500L19.500 18.500H8z" fill="#3a3f8f"/><path d="M1.500 8L8 18.500L1.500 22.500z" fill="#8d92cf"/><path d="M14 1.200L27 8V22.500L14 29.500L1.500 22.500V8z" fill="none" stroke="#222" stroke-width="1.500" stroke-linejoin="round"/></svg>
<svg class="a" style="left:20.0px;top:398.0px;" width="32" height="32" viewBox="0 0 32 32"><path d="M15.13 14.40 A2.62 2.26 0 0 1 17.75 16.66 A3.62 3.52 0 0 1 14.12 20.18 A4.53 5.54 0 0 1 9.59 14.65 A6.54 6.29 0 0 1 16.14 8.36 A7.80 7.30 0 0 1 23.94 15.65 A9.31 11.58 0 0 1 14.63 27.23 A11.32 12.58 0 0 1 3.30 14.65 A12.83 13.84 0 0 1 16.14 0.81 A14.09 15.35 0 0 1 30.23 16.16 A15.10 16.61 0 0 1 27.21 25.97" fill="none" stroke="#222" stroke-width="1.600" stroke-linecap="round"/></svg>
<div class="hl" style="left:11.500px;top:442px;width:51.500px"></div>
<svg class="a" style="left:20.0px;top:454.0px;" width="34" height="34" viewBox="20 454 34 34"><path d="M24.500 457.600H38.300M24.500 457.600C30.500 462.500 33.200 471 33.200 477.500C33.200 480.500 32 481.600 30.200 482.300" fill="none" stroke="#1a1a1a" stroke-width="1.300"/><rect x="22.300" y="480.100" width="5" height="5" fill="#fff" stroke="#1a1a1a" stroke-width="1.400"/><path d="M27.500 483.300H35" stroke="#1a1a1a" stroke-width="1.200"/><circle cx="36.300" cy="483.300" r="1.300" fill="#fff" stroke="#1a1a1a" stroke-width="1"/><path d="M42.600 456.700L50.700 464.300L46.400 469.700L38.800 465.700z" fill="#5b9bd8" stroke="#16324f" stroke-width="1.100" stroke-linejoin="round"/><path d="M43 458.300L46 461.200L42.500 466.300L40.200 465.200z" fill="#b8d8f4"/><path d="M39.900 467L45.800 470.100L44.700 472.600L39.200 469.700z" fill="#f5b21a" stroke="#3b2a00" stroke-width=".8"/><path d="M40 471.200L43 472.800L38.800 480.800L37.200 479.900z" fill="#cfcfcf" stroke="#1a1a1a" stroke-width=".9"/><path d="M41.300 472.500L38.200 480" stroke="#1a1a1a" stroke-width=".8"/></svg>
<svg class="a" style="left:20.0px;top:495.0px;" width="34" height="34" viewBox="20 495 34 34"><path d="M23.600 499.600H29.400L24 510.500C27 513 31 512 32.300 516C33.300 520.500 34 525.300 39.500 525.300C43.500 525.300 46.500 522.500 47.900 519.300" fill="none" stroke="#1a1a1a" stroke-width="1.400" stroke-linejoin="round" stroke-linecap="round"/><path d="M40.900 497.800C44.500 498.500 48.500 501.500 49.900 505.400L43.800 512.200L36.600 523.200L35.300 516.400z" fill="#f9c21e" stroke="#1a1a1a" stroke-width="1.100" stroke-linejoin="round"/><path d="M40.900 498.600C42.500 499 44 499.800 45 500.800L38 514.500L35.900 516z" fill="#fde68a"/><path d="M35.500 516.300C38 513.800 41.500 512.300 43.600 512.300L36.600 523.200z" fill="#fff7d6" stroke="#1a1a1a" stroke-width=".8" stroke-linejoin="round"/><path d="M36.200 520.300L38.300 520.700L36.600 523.400z" fill="#111"/><path d="M44 503.500L47.800 506.800" stroke="#e89a10" stroke-width="2"/></svg>
<svg class="a" style="left:20.0px;top:537.0px;" width="33" height="33" viewBox="0 0 33 33"><path d="M2 2.500C8 3 12.500 5 11 10.500C9.500 16 6 22 10.500 26.500C14 29.500 19 24 25 26.500C28 27.500 30 25.500 31.500 24.500C28 29 25.500 30.500 22 29.500C18 28.500 15 31.500 10.500 30C3.500 27.500 4.500 20 6.500 14C8 9 7 5 2 2.500z" fill="#111"/><g transform="rotate(28 22 14)"><rect x="18" y="0" width="8.500" height="5" fill="#5b8fd0" stroke="#223" stroke-width=".9"/><rect x="18" y="5" width="8.500" height="3" fill="#d42a2a" stroke="#223" stroke-width=".9"/><path d="M18 8H26.500L27.500 16L22.200 26L17 16z" fill="#f6c83a" stroke="#222" stroke-width="1.200" stroke-linejoin="round"/><path d="M22.200 14V25" stroke="#222" stroke-width="1"/><circle cx="22.200" cy="14" r="1.200" fill="#222"/></g></svg>
<div class="t" style="left:21.500px;top:578px;font-size:34px;font-weight:bold;color:#0a0a0a;letter-spacing:0;transform:scaleY(.93);transform-origin:0 0">A</div>
<svg class="a" style="left:44.0px;top:581.0px;" width="6" height="30" viewBox="0 0 6 30"><path d="M3 1.500V28.500M.5 1C2 1 3 1.800 3 2.500C3 1.800 4 1 5.500 1M.5 29C2 29 3 28.200 3 27.500C3 28.200 4 29 5.500 29" fill="none" stroke="#333" stroke-width="1"/></svg>
<div class="hl" style="left:11.500px;top:624.500px;width:51.500px"></div>
<svg class="a" style="left:22.0px;top:640.0px;" width="29" height="28" viewBox="0 0 29 28"><defs><linearGradient id="gg" x1="0" y1="0" x2="1" y2="1"><stop offset="0" stop-color="#4fae5a"/><stop offset=".5" stop-color="#a9d9ae"/><stop offset="1" stop-color="#5fb568"/></linearGradient></defs><path d="M1 2L28 .5L27 27L1.500 27.500z" fill="url(#gg)"/><path d="M7 7.500L22.500 21" stroke="#111" stroke-width="1.500"/><rect x="4.300" y="5" width="5.400" height="5.400" fill="#fff" stroke="#111" stroke-width="1.300"/><circle cx="22.500" cy="21" r="2.900" fill="#fff" stroke="#111" stroke-width="1.300"/></svg>
<svg class="a" style="left:22.0px;top:682.0px;" width="30" height="28" viewBox="0 0 30 28"><path d="M5 5C11 8 19 4 24.500 5C21.500 11 27 18 24.500 23.500C18 21 11 26 5 23.500C8 17 3 11 5 5z" fill="#66b19a" stroke="#111" stroke-width="1.300"/><path d="M5 5C11 8 19 4 24.500 5L14 14z" fill="#6fa9b9" opacity=".7"/><rect x="2.300" y="2.300" width="5.400" height="5.400" fill="#fff" stroke="#111" stroke-width="1.300"/><rect x="21.800" y="2.300" width="5.400" height="5.400" fill="#fff" stroke="#111" stroke-width="1.300"/><rect x="2.300" y="20.800" width="5.400" height="5.400" fill="#fff" stroke="#111" stroke-width="1.300"/><rect x="21.800" y="20.800" width="5.400" height="5.400" fill="#fff" stroke="#111" stroke-width="1.300"/></svg>
<svg class="a" style="left:24.0px;top:722.0px;" width="29" height="32" viewBox="0 0 29 32"><path d="M16.500 9L21 13.500L8 26.500L4.500 27L4 24z" fill="#b9d3ec" stroke="#222" stroke-width="1.200" stroke-linejoin="round"/><path d="M14.500 7L22.500 15" stroke="#111" stroke-width="3.200" stroke-linecap="round"/><path d="M18.500 10.500C19 7 21 2.500 24.500 2C27.500 2 28 5.500 26 7.500C24 9.500 21 10.500 18.500 10.500z" fill="#111" stroke="#111" stroke-width="1.500"/><path d="M3 27.500C1.500 29.500 2 31 3.200 31C4.500 31 4.800 29.500 3 27.500z" fill="#5b9fe0" stroke="#2b5f9f" stroke-width=".7"/></svg>
<svg class="a" style="left:34.0px;top:773.0px;" width="9" height="15" viewBox="0 0 9 15"><path d="M.5 .5l8 7-8 7z" fill="#8b8e8f"/></svg>
<svg class="a" style="left:1102.0px;top:136.0px;" width="22" height="22" viewBox="0 0 22 22"><path d="M1.500 1.500H10.500L14.500 5.500V20H1.500z" fill="#fcfcfc" stroke="#c9c9c9" stroke-width="1"/><path d="M10.500 1.500V5.500H14.500" fill="#f0f0f0" stroke="#c9c9c9" stroke-width=".8"/><circle cx="15.500" cy="11.500" r="4.800" fill="#1f55a5"/><path d="M15.500 8.700v5.600M12.700 11.500h5.600" stroke="#fff" stroke-width="1.700"/></svg>
<svg class="a" style="left:1101.0px;top:180.0px;" width="22" height="20" viewBox="0 0 22 20"><path d="M1 3C1 1.800 1.800 1 3 1H8L10 3.500H18.500C19.700 3.500 20.500 4.300 20.500 5.500V17C20.500 18.200 19.700 19 18.500 19H3C1.800 19 1 18.200 1 17z" fill="#c4a87c" stroke="#a58b62" stroke-width=".8"/><rect x="7" y="7" width="11" height="6" fill="#fafafa" stroke="#999" stroke-width=".8"/><path d="M9 9h7" stroke="#aaa" stroke-width="1"/><path d="M1.500 13.500C6 12.500 12 12.500 20.500 11V17C20.500 18.200 19.700 19 18.500 19H3C1.800 19 1.500 18.200 1.500 17z" fill="#ecd9b9"/></svg>
<svg class="a" style="left:1103.0px;top:222.0px;" width="18" height="21" viewBox="0 0 18 21"><path d="M6.500 1.500C6.500 .5 11 .5 11 1.500V8.500H14L8.800 13.500L3.500 8.500H6.500z" fill="#fff" stroke="#444" stroke-width="1.100" stroke-linejoin="round"/><rect x="1" y="11.500" width="15.500" height="8.500" rx="1" fill="#3b83d6" stroke="#2b63a8" stroke-width=".9"/><rect x="3.200" y="11.500" width="11" height="3" fill="#e8eef7"/><path d="M5.500 14l3.300 2.500L12 14z" fill="#fff"/></svg>
<svg class="a" style="left:1101.0px;top:264.0px;" width="22" height="22" viewBox="0 0 22 22"><rect x="1.500" y="1.500" width="18.500" height="12.500" rx="2.500" fill="#4a4a4a" stroke="#111" stroke-width="1.300"/><rect x="4.500" y="3.500" width="12.500" height="3" fill="#ddd"/><path d="M6 5h5" stroke="#222" stroke-width="1.300"/><path d="M3.800 11.500H17.800L16.800 20H4.800z" fill="#fbfbfb" stroke="#111" stroke-width="1.300"/><path d="M9.500 14l3 1" stroke="#6fbf6f" stroke-width="1"/></svg>
<div class="hl" style="left:1089.500px;top:304.500px;width:44.500px"></div>
<svg class="a" style="left:1101.0px;top:324.0px;" width="22" height="22" viewBox="0 0 22 22"><path d="M6 1.500H15.500L19.500 5.500V20H6z" fill="#efeeed" stroke="#111" stroke-width="1.400" stroke-linejoin="round"/><path d="M15.500 1.500V5.500H19.500" fill="none" stroke="#111" stroke-width="1.100"/><path d="M.5 11H10.500" stroke="#111" stroke-width="1.500"/><path d="M8.500 7.500L12.500 11L8.500 14.500z" fill="#111"/></svg>
<svg class="a" style="left:1101.0px;top:367.0px;" width="22" height="22" viewBox="0 0 22 22"><path d="M1.500 1.500H10.500L14.500 5.500V20H1.500z" fill="#efeeed" stroke="#111" stroke-width="1.400" stroke-linejoin="round"/><path d="M10.500 1.500V5.500H14.500" fill="none" stroke="#111" stroke-width="1.100"/><path d="M8 11.500H18" stroke="#111" stroke-width="1.500"/><path d="M16.500 8L20.500 11.500L16.500 15z" fill="#111"/></svg>
<div class="hl" style="left:1089.500px;top:407px;width:44.500px"></div>
<svg class="a" style="left:1101.0px;top:429.0px;" width="22" height="17" viewBox="0 0 22 17"><path d="M7.500 1L1.500 5.500L7.500 10V7H14C17.500 7 17.500 12.500 14 12.500H9.500V15H14.500C21.500 15 21.500 4 14.500 4H7.500z" fill="#fbf5e3" stroke="#f3e7c4" stroke-width="1" stroke-linejoin="round"/></svg>
<svg class="a" style="left:1101.0px;top:472.0px;" width="22" height="17" viewBox="0 0 22 17"><g transform="translate(22,0) scale(-1,1)"><path d="M7.500 1L1.500 5.500L7.500 10V7H14C17.500 7 17.500 12.500 14 12.500H9.500V15H14.500C21.500 15 21.500 4 14.500 4H7.500z" fill="#e9f3e6" stroke="#d3e6cf" stroke-width="1" stroke-linejoin="round"/></g></svg>
<div class="hl" style="left:1089.500px;top:510px;width:44.500px"></div>
<svg class="a" style="left:1101.0px;top:529.0px;" width="22" height="23" viewBox="0 0 22 23"><rect x="1.200" y="1.200" width="12.600" height="12.600" rx="1.500" fill="#f7f7f7" stroke="#555" stroke-width="1.200"/><path d="M3.500 4.500h8M3.500 7h8M3.500 9.500h5" stroke="#999" stroke-width="1"/><rect x="8" y="8.500" width="12.600" height="12.600" rx="1.500" fill="#f7f7f7" stroke="#555" stroke-width="1.200"/><path d="M13 12h5.500M13 14.500h5.500M10.500 17h6" stroke="#aaa" stroke-width="1"/></svg>
<svg class="a" style="left:1101.0px;top:572.0px;" width="23" height="23" viewBox="0 0 23 23"><path d="M2.500 .8L13 14.500M19.500 .8L9 14.500" stroke="#8a8a8a" stroke-width="1.200"/><path d="M2.500 .8L11 10.500L9.500 12.500z M19.500 .8L11 10.500L12.500 12.500z" fill="#f1f1f1" stroke="#8a8a8a" stroke-width=".9"/><circle cx="6" cy="17" r="4.600" fill="#d41919" stroke="#8f0b0b" stroke-width="1"/><circle cx="16.500" cy="17" r="4.600" fill="#d41919" stroke="#8f0b0b" stroke-width="1"/><circle cx="6" cy="17" r="1.700" fill="#f6dada"/><circle cx="16.500" cy="17" r="1.700" fill="#f6dada"/><circle cx="11.200" cy="11" r=".9" fill="#555"/></svg>
<svg class="a" style="left:1101.0px;top:615.0px;" width="22" height="22" viewBox="0 0 22 22"><rect x="1.200" y="2.800" width="16.500" height="17.500" rx="1.500" fill="#c98f4b" stroke="#8e5f26" stroke-width="1"/><path d="M6 2.800C6 .5 13 .5 13 2.800L14.500 5H4.500z" fill="#ddd" stroke="#777" stroke-width=".9"/><rect x="9" y="8" width="11" height="12.500" fill="#fafafa" stroke="#777" stroke-width="1"/><path d="M11 11h7M11 13.500h7M11 16h4.500" stroke="#aaa" stroke-width="1"/></svg>
<div class="hl" style="left:1089.500px;top:655.500px;width:44.500px"></div>
<svg class="a" style="left:1101.0px;top:675.0px;" width="23" height="23" viewBox="0 0 23 23"><circle cx="9.800" cy="9.800" r="8.300" fill="#fafafa" stroke="#111" stroke-width="1.700"/><circle cx="9.800" cy="9.800" r="6.600" fill="none" stroke="#b9d3ef" stroke-width="1.200"/><rect x="4.800" y="6" width="10" height="7.500" fill="#fff" stroke="#222" stroke-width="1.100" stroke-dasharray="1.300 1.100"/><path d="M16.300 16.300L19.800 19.800" stroke="#111" stroke-width="3.400" stroke-linecap="round"/></svg>
<svg class="a" style="left:1101.0px;top:717.0px;" width="23" height="23" viewBox="0 0 23 23"><circle cx="9.800" cy="9.800" r="8.300" fill="#fafafa" stroke="#111" stroke-width="1.700"/><circle cx="9.800" cy="9.800" r="6.600" fill="none" stroke="#b9d3ef" stroke-width="1.200"/><rect x="4.500" y="4.500" width="6.800" height="6.800" rx="1" fill="#cfdbec" stroke="#222" stroke-width="1"/><rect x="8" y="8" width="6.800" height="6.800" rx="1" fill="#f5d94a" stroke="#222" stroke-width="1"/><path d="M16.300 16.300L19.800 19.800" stroke="#111" stroke-width="3.400" stroke-linecap="round"/></svg>
<svg class="a" style="left:1108.0px;top:773.0px;" width="9" height="15" viewBox="0 0 9 15"><path d="M.5 .5l8 7-8 7z" fill="#8b8e8f"/></svg>
<div class="sel" style="left:1144px;top:126.5px;width:44px;height:40.5px"></div>
<svg class="a" style="left:1153.5px;top:134.7px;" width="24" height="24" viewBox="0 0 24 24"><path d="M7.500 7.500L14.500 14.500" stroke="#111" stroke-width="1.500"/><path d="M17.300 17.300L10.800 15.200L15.200 10.800z" fill="#111"/><path d="M5.700 3.300L8.200 5.800L5.700 8.300L3.200 5.800z" fill="#dfe6ff" stroke="#2a2aee" stroke-width="1.900" stroke-linejoin="miter"/><path d="M18.300 15.700L20.800 18.200L18.300 20.700L15.800 18.200z" fill="#e4f3e0" stroke="#1c8a2a" stroke-width="1.900"/></svg>
<div class="hl" style="left:1144px;top:176.500px;width:44px"></div>
<svg class="a" style="left:1153.5px;top:194.6px;" width="24" height="24" viewBox="0 0 24 24"><path d="M7.500 7.500L14.500 14.500" stroke="#111" stroke-width="1.500"/><path d="M17.300 17.300L10.800 15.200L15.200 10.800z" fill="#111"/><path d="M5.700 3.300L8.200 5.800L5.700 8.300L3.200 5.800z" fill="#dfe6ff" stroke="#2a2aee" stroke-width="1.900" stroke-linejoin="miter"/><path d="M18.300 15.700L20.800 18.200L18.300 20.700L15.800 18.200z" fill="#e4f3e0" stroke="#1c8a2a" stroke-width="1.900"/></svg>
<svg class="a" style="left:1155.0px;top:239.0px;" width="20" height="18" viewBox="0 0 20 18"><path d="M17 2V16.500H1.500" fill="none" stroke="#cfe0cc" stroke-width="1.300" stroke-dasharray="1.500 1.500"/></svg>
<svg class="a" style="left:1155.0px;top:282.0px;" width="22" height="18" viewBox="0 0 22 18"><path d="M17 1V14.500H1.500" fill="none" stroke="#dddbd8" stroke-width="1.300" stroke-dasharray="1.500 1.500"/><path d="M17 11.500L20 14.500L17 17.500L14 14.500z" fill="#edf4eb" stroke="#cfe0cc" stroke-width="1"/></svg>
<svg class="a" style="left:1155.0px;top:323.0px;" width="22" height="20" viewBox="0 0 22 20"><path d="M17 3V17.500H1.500" fill="none" stroke="#dddbd8" stroke-width="1.300" stroke-dasharray="1.500 1.500"/><path d="M17 2.500L19.500 6L17 9.500L14.500 6z" fill="#edf4eb" stroke="#cfe0cc" stroke-width="1"/></svg>
<svg class="a" style="left:1155.0px;top:366.0px;" width="22" height="20" viewBox="0 0 22 20"><path d="M17 2V17.500H1.500" fill="none" stroke="#dddbd8" stroke-width="1.300" stroke-dasharray="1.500 1.500"/><circle cx="6" cy="7" r="2.500" fill="#edf4eb" stroke="#cfe0cc" stroke-width="1"/></svg>
<div class="hl" style="left:1144px;top:407px;width:44px"></div>
<div class="sel" style="left:1144px;top:417.5px;width:44px;height:40.5px"></div>
<svg class="a" style="left:1153.5px;top:425.5px;" width="24" height="24" viewBox="0 0 24 24"><path d="M7.500 7.500L14.500 14.500" stroke="#111" stroke-width="1.500"/><path d="M17.300 17.300L10.800 15.200L15.200 10.800z" fill="#111"/><path d="M5.700 3.300L8.200 5.800L5.700 8.300L3.200 5.800z" fill="#dfe6ff" stroke="#2a2aee" stroke-width="1.900" stroke-linejoin="miter"/><path d="M18.300 15.700L20.800 18.200L18.300 20.700L15.800 18.200z" fill="#e4f3e0" stroke="#1c8a2a" stroke-width="1.900"/></svg>
<svg class="a" style="left:1154.0px;top:470.0px;" width="24" height="22" viewBox="0 0 24 22"><path d="M2.500 2.500C11 3.500 16.500 9.500 13.500 18.500C17 17 20 14.500 21.500 10.500" fill="none" stroke="#128212" stroke-width="1.800" stroke-linecap="round" stroke-linejoin="round"/></svg>
<svg class="a" style="left:1154.0px;top:512.0px;" width="24" height="22" viewBox="0 0 24 22"><path d="M2 17.500L21 6.500M3.500 21L20.500 1.500" stroke="#333" stroke-width="1.200"/><circle cx="11.500" cy="11.800" r="2.600" fill="#9fc6a0" stroke="#157a15" stroke-width="1.500"/></svg>
<div class="sel" style="left:1144px;top:546px;width:44px;height:40.5px"></div>
<svg class="a" style="left:1154.0px;top:554.0px;" width="24" height="26" viewBox="0 0 24 26"><path d="M2.500 3.500C11 4.500 16.500 10.500 13.500 19.500C17 18 20 15.500 21.500 11.500" fill="none" stroke="#444" stroke-width="1.300" stroke-linecap="round"/><path d="M11.500 15.500L15 19L11.500 22.500L8 19z" fill="#b9c6e6" stroke="#157a15" stroke-width="1.600"/></svg>
<svg class="a" style="left:1154.0px;top:595.0px;" width="24" height="24" viewBox="0 0 24 24"><path d="M1.500 4.500H8" stroke="#333" stroke-width="1.200"/><path d="M11 9C15 11.500 14.500 15 12 19.500C16 20.500 19 18 21 14" fill="none" stroke="#444" stroke-width="1.200" stroke-linecap="round"/><rect x="7.200" y="3" width="6" height="6" fill="#b9c6e6" stroke="#157a15" stroke-width="1.600"/></svg>
<svg class="a" style="left:1153.0px;top:639.0px;" width="26" height="24" viewBox="0 0 26 24"><path d="M2 19.500L24 5" stroke="#777" stroke-width="1"/><path d="M4.500 21.500L8.500 13.500M7.500 19.500L11.500 11.500M16.500 13L20.500 4.500M19.500 11L23.500 2.500" stroke="#d11a1a" stroke-width="1.500"/><circle cx="13" cy="12.200" r="2.600" fill="#9fc6a0" stroke="#157a15" stroke-width="1.500"/></svg>
<div class="hl" style="left:1144px;top:681.500px;width:44px"></div>
<div class="sel" style="left:1144px;top:691.5px;width:44px;height:40.5px"></div>
<svg class="a" style="left:1153.5px;top:699.8px;" width="24" height="24" viewBox="0 0 24 24"><path d="M7.500 7.500L14.500 14.500" stroke="#111" stroke-width="1.500"/><path d="M17.300 17.300L10.800 15.200L15.200 10.800z" fill="#111"/><path d="M5.700 3.300L8.200 5.800L5.700 8.300L3.200 5.800z" fill="#dfe6ff" stroke="#2a2aee" stroke-width="1.900" stroke-linejoin="miter"/><path d="M18.300 15.700L20.800 18.200L18.300 20.700L15.800 18.200z" fill="#e4f3e0" stroke="#1c8a2a" stroke-width="1.900"/></svg>
<svg class="a" style="left:1161.0px;top:773.0px;" width="9" height="15" viewBox="0 0 9 15"><path d="M.5 .5l8 7-8 7z" fill="#8b8e8f"/></svg>
<div class="a" style="left:393.0px;top:126.0px;width:648.0px;height:637.5px;background:#f6f5f4;box-shadow:0 2px 20px 1px rgba(0,0,0,.24)"></div>
<svg class="a" style="left:390.0px;top:123.0px;" width="654" height="644" viewBox="0 0 654 644"><rect x="3.150" y="3.250" width="647.300" height="636.900" fill="none" stroke="#1a82d8" stroke-width="1.700"/></svg>
<div class="a" style="left:394.0px;top:127.0px;width:646.0px;height:36.5px;background:#fff"></div>
<svg class="a" style="left:402.9px;top:133.1px;" width="23" height="23" viewBox="0 0 23 23"><g transform="translate(-3,-4) scale(0.03356)"><path d="M400 138 L706 424 Q718 446 690 452 L575 470 L545 500 L540 600 L482 648 Q478 738 402 738 Q338 735 338 650 L222 650 L228 628 L320 600 L212 560 L215 522 L290 500 L120 458 Q96 446 110 428 Z" fill="#050505"/><path d="M400 178 L540 312 L480 288 L425 322 L380 292 L330 352 L228 352 Z" fill="#fff"/><path d="M418 196 L610 378 L520 330 L478 288 Z" fill="#5a5f6e" opacity=".75"/><path d="M585 640 L648 566 L676 590 L612 656 Z" fill="#111"/><path d="M345 520 Q380 500 405 535 Q380 560 345 545z" fill="#777" opacity=".7"/></g></svg>
<div class="t" style="left:429.4px;top:138.29px;font-size:15.6px;color:#101010;letter-spacing:-0.655px;">PDF Import Settings</div>
<svg class="a" style="left:1015.0px;top:138.0px;" width="14" height="14" viewBox="0 0 14 14"><path d="M.8 .8l12 12M12.800 .8l-12 12" stroke="#111" stroke-width="1.400"/></svg>
<div class="t" style="left:401.8px;top:172.80px;font-size:15px;color:#1d2122;font-weight:bold;letter-spacing:-0.796px;">Page settings</div>
<div class="t" style="left:421.0px;top:208.30px;font-size:15px;color:#2b2f30;letter-spacing:-0.592px;">Select page:</div>
<div class="spin2" style="left:512.500px;top:194.500px;width:83.500px;height:41.500px;border-color:#cdc7c2"></div>
<div class="vl" style="left:553.500px;top:195.500px;height:39.500px;background:#e4e1de"></div><div class="vl" style="left:574.500px;top:195.500px;height:39.500px;background:#e4e1de"></div>
<div class="t" style="left:516.0px;top:208.30px;font-size:15px;color:#111;">3</div>
<svg class="a" style="left:557.5px;top:208.5px;" width="13" height="13" viewBox="0 0 13 13"><path d="M.3 6.500h12.400" stroke="#2e3436" stroke-width="1.800"/></svg>
<svg class="a" style="left:578.0px;top:208.5px;" width="13" height="13" viewBox="0 0 13 13"><path d="M.3 6.500h12.400M6.500 .3v12.400" stroke="#2e3436" stroke-width="1.800"/></svg>
<div class="t" style="left:610.7px;top:208.30px;font-size:15px;color:#2b2f30;letter-spacing:0.007px;">out of 8</div>
<div class="a" style="left:421px;top:253.500px;width:19.500px;height:19.500px;border:1px solid #bfb8b1;border-radius:3.500px;background:linear-gradient(#fff,#f8f7f6)"></div>
<div class="t" style="left:445.5px;top:255.80px;font-size:15px;color:#2b2f30;letter-spacing:-0.273px;">Clip to:</div>
<div class="btn" style="left:506.500px;top:242.500px;width:116.500px;height:41.500px;background:#f7f6f5;border-color:#d6d1cc"></div>
<div class="t" style="left:521.7px;top:255.30px;font-size:15px;color:#929595;letter-spacing:-0.335px;">media box</div>
<svg class="a" style="left:593.0px;top:259.5px;" width="15" height="8" viewBox="0 0 15 8"><path d="M.3 .3h14.400l-7.200 7.200z" fill="#8b8e8f"/></svg>
<div class="t" style="left:401.8px;top:300.50px;font-size:15px;color:#1d2122;font-weight:bold;letter-spacing:-0.330px;">Import settings</div>
<div class="a" style="left:415.500px;top:325.200px;width:19.800px;height:19.800px;border:1px solid #bfb8b1;border-radius:50%;background:linear-gradient(#fff,#f6f5f4)"></div>
<div class="t" style="left:440.8px;top:326.30px;font-size:15px;color:#2b2f30;letter-spacing:-0.169px;">Poppler/Cairo import</div>
<div class="t" style="left:411.5px;top:354.20px;font-size:15px;color:#2b2f30;letter-spacing:-0.205px;">Import via external library. Text consists of groups</div>
<div class="t" style="left:411.5px;top:372.45px;font-size:15px;color:#2b2f30;letter-spacing:-0.185px;">containing cloned glyphs where each glyph is a path.</div>
<div class="t" style="left:411.5px;top:390.70px;font-size:15px;color:#2b2f30;letter-spacing:-0.383px;">Images are stored internally. Meshes cause entire</div>
<div class="t" style="left:411.5px;top:408.95px;font-size:15px;color:#2b2f30;letter-spacing:-0.342px;">document to be rendered as a raster image.</div>
<div class="a" style="left:415.400px;top:432.800px;width:19.800px;height:19.800px;border-radius:50%;background:#3584e4;border:1px solid #1b6acb"></div>
<div class="a" style="left:420.800px;top:438.200px;width:9px;height:9px;border-radius:50%;background:#fff"></div>
<div class="t" style="left:440.9px;top:434.70px;font-size:15px;color:#2b2f30;letter-spacing:-0.079px;">Internal import</div>
<div class="t" style="left:411.5px;top:461.30px;font-size:15px;color:#2b2f30;letter-spacing:-0.203px;">Import via internal (Poppler derived) library. Text is</div>
<div class="t" style="left:411.5px;top:479.60px;font-size:15px;color:#2b2f30;letter-spacing:-0.353px;">stored as text but white space is missing. Meshes are</div>
<div class="t" style="left:411.5px;top:497.90px;font-size:15px;color:#2b2f30;letter-spacing:-0.183px;">converted to tiles, the number depends on the</div>
<div class="t" style="left:411.5px;top:516.20px;font-size:15px;color:#2b2f30;letter-spacing:-0.196px;">precision set below.</div>
<div class="a" style="left:415.800px;top:540.5px;width:19.600px;height:19.600px;border-radius:3.500px;background:#3584e4;border:1px solid #1b6acb"></div>
<svg class="a" style="left:415.8px;top:540.5px;" width="20" height="20" viewBox="0 0 20 20"><path d="M4.500 10L8.300 13.800L15.300 6.200" fill="none" stroke="#fff" stroke-width="2.500" stroke-linecap="round" stroke-linejoin="round"/></svg>
<div class="t" style="left:440.9px;top:542.30px;font-size:15px;color:#2b2f30;letter-spacing:-0.329px;">Replace PDF fonts by closest-named installed fonts</div>
<div class="a" style="left:415.800px;top:570px;width:19.600px;height:19.600px;border-radius:3.500px;background:#3584e4;border:1px solid #1b6acb"></div>
<svg class="a" style="left:415.8px;top:570.0px;" width="20" height="20" viewBox="0 0 20 20"><path d="M4.500 10L8.300 13.800L15.300 6.200" fill="none" stroke="#fff" stroke-width="2.500" stroke-linecap="round" stroke-linejoin="round"/></svg>
<div class="t" style="left:440.9px;top:571.70px;font-size:15px;color:#2b2f30;letter-spacing:-0.663px;">Embed images</div>
<div class="t" style="left:416.2px;top:598.30px;font-size:15px;color:#2b2f30;letter-spacing:-0.238px;">Precision of approximating gradient meshes:</div>
<div class="t" style="left:423.3px;top:623.07px;font-size:13.5px;color:#9a9d9e;letter-spacing:-0.122px;">2.0</div>
<div class="a" style="left:433.0px;top:653.5px;width:188.5px;height:3.5px;background:#dad6d2;border:1px solid #cfc9c3;border-radius:2px"></div>
<div class="a" style="left:419.800px;top:643px;width:23.500px;height:23.500px;border-radius:50%;border:1px solid #b6afa8;background:linear-gradient(#fff,#f3f2f1);box-shadow:0 1px 1px rgba(0,0,0,.08)"></div>
<div class="t" style="left:686.7px;top:638.30px;font-size:15px;color:#2b2f30;letter-spacing:0.066px;">rough</div>
<div class="t" style="left:416.2px;top:679.30px;font-size:15px;color:#1d2122;font-weight:bold;letter-spacing:-0.266px;">Note:</div>
<div class="t" style="left:456.2px;top:679.30px;font-size:15px;color:#2b2f30;letter-spacing:-0.143px;">setting the precision too high may result in a</div>
<div class="t" style="left:416.2px;top:697.70px;font-size:15px;color:#2b2f30;letter-spacing:-0.399px;">large SVG file and slow performance.</div>
<div class="btn" style="left:825px;top:719.500px;width:103px;height:41px"></div>
<div class="t" style="left:855.7px;top:731.80px;font-size:15px;color:#2b2f30;letter-spacing:-0.816px;">Cancel</div>
<div class="btn" style="left:935px;top:722px;width:102px;height:39px"></div>
<div class="a" style="left:933.5px;top:720.3px;width:105.3px;height:42.4px;border:2.800px solid #fa0505;border-radius:3px"></div>
<div class="t" style="left:975.7px;top:731.80px;font-size:15px;color:#2b2f30;letter-spacing:-1.436px;">OK</div>
<div class="a" style="left:787.8px;top:164.5px;width:244.8px;height:319.0px;background:#fff"></div>
<svg class="a" style="left:787.8px;top:164.5px;overflow:hidden" width="245" height="319" viewBox="0 0 245 319"><defs><filter id="b1" x="-5%" y="-5%" width="110%" height="110%"><feGaussianBlur stdDeviation=".35"/></filter><filter id="b2" x="-5%" y="-5%" width="110%" height="110%"><feGaussianBlur stdDeviation=".6"/></filter></defs><g filter="url(#b1)"><text x="25.40" y="33.30" font-size="3.800" fill="#555" textLength="186.1" lengthAdjust="spacingAndGlyphs" font-family="Liberation Sans, sans-serif">In addition to text, you are allowed to edit images within a PDF. Click the image and a</text><text x="25.40" y="43.00" font-size="3.800" fill="#555" textLength="186.1" lengthAdjust="spacingAndGlyphs" font-family="Liberation Sans, sans-serif">drop-down menu pops up, allowing you to edit, rotate, replace images, or change the</text><text x="25.40" y="52.50" font-size="3.800" fill="#555" textLength="32.6" lengthAdjust="spacingAndGlyphs" font-family="Liberation Sans, sans-serif">picture opacity.</text><text x="26.90" y="128.60" font-size="3.800" fill="#555" textLength="186.1" lengthAdjust="spacingAndGlyphs" font-family="Liberation Sans, sans-serif">OCR feature is still available to make a scanned PDF editable. By clicking OCR in the tab</text><text x="26.90" y="138.00" font-size="3.800" fill="#222" textLength="8.0" lengthAdjust="spacingAndGlyphs" font-weight="bold" font-family="Liberation Sans, sans-serif">Edit</text><text x="35.60" y="138.00" font-size="3.800" fill="#555" textLength="177.4" lengthAdjust="spacingAndGlyphs" font-family="Liberation Sans, sans-serif">, you are allowed to either copy the text or download the OCR results as a new text</text><text x="26.90" y="147.40" font-size="3.800" fill="#555" textLength="49.5" lengthAdjust="spacingAndGlyphs" font-family="Liberation Sans, sans-serif">file after a few seconds.</text></g><g filter="url(#b2)"><g transform="translate(12.200,15.500) scale(0.18333)"><rect x="252" y="252" width="624" height="222" fill="#587a71"/><rect x="252" y="252" width="624" height="30" fill="#4d6f67"/><rect x="345" y="252" width="5" height="215" fill="#6b8b82"/><rect x="470" y="252" width="5" height="215" fill="#6b8b82"/><rect x="585" y="252" width="5" height="215" fill="#6b8b82"/><rect x="700" y="252" width="5" height="215" fill="#6b8b82"/><rect x="800" y="252" width="5" height="215" fill="#6b8b82"/><ellipse cx="322" cy="335" rx="26" ry="38" fill="#2b3b38"/><ellipse cx="425" cy="310" rx="22" ry="36" fill="#2f403c"/><ellipse cx="560" cy="400" rx="30" ry="50" fill="#2f403c"/><ellipse cx="690" cy="350" rx="18" ry="26" fill="#33443f"/><ellipse cx="505" cy="330" rx="16" ry="30" fill="#3a4c47"/><path d="M812 300L880 368L812 436L744 368z" fill="none" stroke="#7c9a90" stroke-width="5"/><path d="M826 350L790 388H836M826 350V400" fill="none" stroke="#c4d0ca" stroke-width="7"/><ellipse cx="300" cy="430" rx="30" ry="36" fill="#c8472b"/><ellipse cx="322" cy="440" rx="18" ry="28" fill="#e6dfd2"/><ellipse cx="303" cy="392" rx="16" ry="17" fill="#d9a07c"/><ellipse cx="300" cy="378" rx="19" ry="9" fill="#c73a22"/><ellipse cx="375" cy="420" rx="38" ry="46" fill="#e9e3d8"/><ellipse cx="372" cy="350" rx="20" ry="24" fill="#d8a07e"/><path d="M345 345Q350 315 378 318Q402 322 398 352Q385 332 368 336Q355 340 345 360z" fill="#8f3a22"/><ellipse cx="352" cy="436" rx="12" ry="12" fill="#9f2620"/><ellipse cx="392" cy="432" rx="12" ry="12" fill="#a82a22"/><ellipse cx="372" cy="446" rx="10" ry="10" fill="#8f221c"/><ellipse cx="478" cy="415" rx="46" ry="52" fill="#e7e0d4"/><path d="M445 385Q478 360 512 385L520 460H438z" fill="#c8352a"/><ellipse cx="480" cy="375" rx="12" ry="14" fill="#ece6da"/><ellipse cx="468" cy="325" rx="20" ry="24" fill="#dba47f"/><path d="M446 318Q455 292 482 298Q495 305 490 320Q470 310 446 325z" fill="#7a3a22"/><ellipse cx="535" cy="385" rx="10" ry="24" fill="#e9e2d6"/><circle cx="535" cy="273" r="10" fill="#f2eee4"/><ellipse cx="640" cy="410" rx="55" ry="60" fill="#d5532b"/><ellipse cx="655" cy="400" rx="30" ry="40" fill="#c7432a"/><path d="M545 312Q575 305 612 345L640 385L600 400Q585 350 545 330z" fill="#ebe5d9"/><ellipse cx="618" cy="318" rx="20" ry="22" fill="#dca681"/><path d="M592 305Q600 282 628 285Q650 290 645 306Q620 300 592 312z" fill="#d23a25"/><ellipse cx="608" cy="291" rx="10" ry="6" fill="#efe9dd"/><ellipse cx="548" cy="318" rx="12" ry="9" fill="#dca681"/><ellipse cx="715" cy="425" rx="28" ry="42" fill="#e9e2d7"/><ellipse cx="728" cy="432" rx="14" ry="34" fill="#6b93c4"/><ellipse cx="708" cy="372" rx="16" ry="18" fill="#e0ad87"/><ellipse cx="706" cy="356" rx="20" ry="11" fill="#eeeae0"/><ellipse cx="692" cy="385" rx="8" ry="14" fill="#d8b36a"/><ellipse cx="830" cy="448" rx="38" ry="26" fill="#cc452b"/><ellipse cx="828" cy="408" rx="16" ry="17" fill="#dca681"/><ellipse cx="832" cy="394" rx="20" ry="10" fill="#2c3f76"/><ellipse cx="790" cy="462" rx="16" ry="8" fill="#d8a07e"/><ellipse cx="270" cy="462" rx="12" ry="6" fill="#d9a380"/><ellipse cx="345" cy="462" rx="12" ry="6" fill="#d9a380"/><ellipse cx="452" cy="462" rx="12" ry="6" fill="#d9a380"/><ellipse cx="560" cy="462" rx="12" ry="6" fill="#d9a380"/><ellipse cx="700" cy="462" rx="12" ry="6" fill="#d9a380"/><ellipse cx="770" cy="462" rx="12" ry="6" fill="#d9a380"/><rect x="252" y="462" width="624" height="10" fill="#b9b3a2"/><rect x="252" y="470" width="624" height="67" fill="#2c2f2e"/><text x="384" y="516" font-family="Liberation Serif, serif" font-style="italic" font-weight="bold" font-size="40" fill="#e07b2c" textLength="360" lengthAdjust="spacingAndGlyphs">Our and Only Boston Baseballs</text><rect x="384" y="520" width="360" height="4" fill="#c9661f"/><rect x="876" y="252" width="90" height="285" fill="#e4e4e2"/><rect x="882" y="256" width="78" height="173" fill="#ebebea" stroke="#e25a5a" stroke-width="5"/><rect x="890" y="264" width="14" height="10" fill="#7fd08a"/><rect x="890" y="284" width="62" height="5" fill="#cfcfcf"/><rect x="890" y="304" width="62" height="4" fill="#d6d6d6"/><rect x="890" y="334" width="20" height="5" fill="#b9c9e6"/><rect x="890" y="368" width="14" height="5" fill="#cdcdcd"/><rect x="890" y="400" width="14" height="5" fill="#cdcdcd"/></g></g><g filter="url(#b2)"><rect x="108.40" y="158.10" width="62.00" height="1.00" fill="#555" /><rect x="69.40" y="159.50" width="99.50" height="128.80" fill="#dedede" /><rect x="70.10" y="159.90" width="98.00" height="127.60" fill="#ffffff" /><rect x="169.00" y="167.50" width="1.50" height="2.00" fill="#777" /><rect x="169.00" y="175.50" width="1.50" height="2.00" fill="#888" /><rect x="74.50" y="166.80" width="39.50" height="2.60" fill="#1fbf8f" /><path d="M163.4 163.3l1.600 1.600m0-1.600l-1.600 1.600" stroke="#999" stroke-width=".5"/><rect x="76.70" y="176.75" width="25.00" height="1.30" fill="#666" /><rect x="76.40" y="180.70" width="45.00" height="4.20" fill="#fff" stroke="#d9d9d9" stroke-width=".5"/><rect x="78.20" y="182.40" width="8.00" height="1.00" fill="#aaa" /><rect x="76.70" y="189.25" width="8.50" height="1.30" fill="#555" /><circle cx="78.20" cy="195.00" r="1.500" fill="#555" stroke="#999" stroke-width=".5"/><rect x="81.20" y="194.35" width="37.00" height="1.30" fill="#777" /><circle cx="78.20" cy="200.50" r="1.500" fill="#fff" stroke="#999" stroke-width=".5"/><rect x="81.20" y="199.85" width="33.00" height="1.30" fill="#777" /><circle cx="78.20" cy="206.20" r="1.500" fill="#fff" stroke="#999" stroke-width=".5"/><rect x="81.20" y="205.55" width="49.00" height="1.30" fill="#777" /><rect x="76.70" y="211.65" width="14.00" height="1.30" fill="#555" /><circle cx="78.20" cy="217.50" r="1.500" fill="#fff" stroke="#999" stroke-width=".5"/><rect x="81.20" y="216.85" width="10.00" height="1.30" fill="#777" /><circle cx="78.20" cy="223.20" r="1.500" fill="#555" stroke="#999" stroke-width=".5"/><rect x="81.20" y="222.55" width="40.00" height="1.30" fill="#777" /><circle cx="78.20" cy="228.90" r="1.500" fill="#fff" stroke="#999" stroke-width=".5"/><rect x="81.20" y="228.25" width="13.00" height="1.30" fill="#777" /><rect x="81.20" y="235.70" width="33.00" height="0.60" fill="#e3e3e3" /><rect x="81.70" y="235.85" width="1.50" height="1.30" fill="#999" /><rect x="117.20" y="235.85" width="1.50" height="1.30" fill="#999" /><rect x="81.20" y="242.30" width="14.00" height="1.00" fill="#aaa" /><circle cx="96.70" cy="242.80" r="1.500" fill="#fff" stroke="#aaa" stroke-width=".5"/><rect x="76.70" y="248.85" width="10.00" height="1.30" fill="#555" /><rect x="76.70" y="254.25" width="40.00" height="1.30" fill="#888" /><circle cx="119.70" cy="254.90" r="1.600" fill="#fff" stroke="#aaa" stroke-width=".5"/><rect x="76.40" y="259.50" width="54.00" height="4.40" fill="#fff" stroke="#cfcfcf" stroke-width=".6"/><rect x="102.20" y="260.85" width="2.50" height="1.50" fill="#666" /><rect x="103.10" y="277.20" width="28.00" height="6.80" fill="#c9c9c9" /><rect x="112.20" y="280.10" width="9.00" height="1.00" fill="#e9e9e9" /><rect x="135.60" y="277.20" width="28.20" height="6.80" fill="#06b58a" /><rect x="148.20" y="280.10" width="3.00" height="1.00" fill="#d9f5ec" /></g></svg>
<!--MORE-->
</body></html>
